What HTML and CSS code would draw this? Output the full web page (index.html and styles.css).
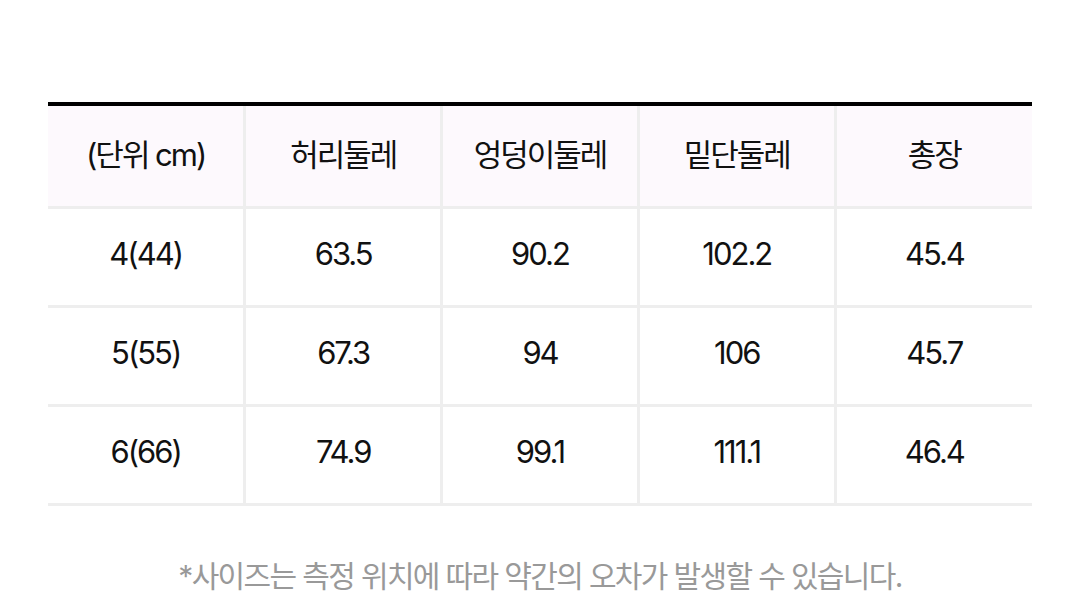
FILE: index.html
```html
<!DOCTYPE html>
<html lang="ko">
<head>
<meta charset="utf-8">
<link rel="stylesheet" href="styles.css">
</head>
<body>
<div class="page">
  <table class="size-table">
    <thead>
      <tr><th>(단위 cm)</th><th>허리둘레</th><th>엉덩이둘레</th><th>밑단둘레</th><th>총장</th></tr>
    </thead>
    <tbody>
      <tr><td>4(44)</td><td>63.5</td><td>90.2</td><td>102.2</td><td>45.4</td></tr>
      <tr><td>5(55)</td><td>67.3</td><td>94</td><td>106</td><td>45.7</td></tr>
      <tr><td>6(66)</td><td>74.9</td><td>99.1</td><td>111.1</td><td>46.4</td></tr>
    </tbody>
  </table>
  <p class="note">*사이즈는 측정 위치에 따라 약간의 오차가 발생할 수 있습니다.</p>
</div>
</body>
</html>
```
FILE: styles.css
```css
html, body {
  margin: 0;
  padding: 0;
  background: #fff;
}
body {
  font-family: Inter, "Noto Sans CJK KR", sans-serif;
  color: #111;
}
.page {
  padding: 102px 36px 0 48px;
}
.size-table {
  width: 984px;
  border-collapse: collapse;
  table-layout: fixed;
  border-top: 4px solid #000;
}
.size-table th,
.size-table td {
  font-size: 31px;
  font-weight: 400;
  letter-spacing: -0.065em;
  text-align: center;
  border: 3px solid #eeeeee;
  padding: 0;
}
.size-table th {
  height: 92px;
  padding-bottom: 8px;
  background: #fdf9fd;
  border-top: none;
}
.size-table td {
  height: 89px;
  padding-bottom: 7px;
}
.size-table th:first-child,
.size-table td:first-child { border-left: none; }
.size-table th:last-child,
.size-table td:last-child { border-right: none; }
.note {
  margin: 46px 0 0 0;
  text-align: center;
  font-size: 30px;
  letter-spacing: -0.055em;
  color: #999;
  width: 984px;
}
```
